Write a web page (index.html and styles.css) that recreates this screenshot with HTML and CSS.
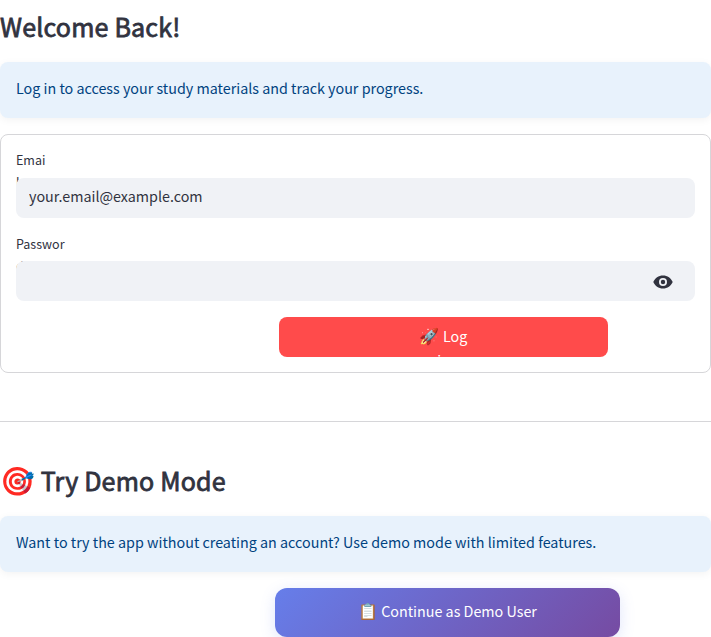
FILE: index.html
```html
<!DOCTYPE html>
<html lang="en">
<head>
<meta charset="utf-8">
<title>Welcome Back!</title>
<link rel="stylesheet" href="styles.css">
</head>
<body>
<main>
  <h2 class="title">Welcome Back!</h2>
  <div class="alert">Log in to access your study materials and track your progress.</div>
  <form class="card">
    <label class="label" for="email">Emai<br>l</label>
    <div class="field"><input id="email" type="text" value="your.email@example.com"></div>
    <label class="label label-password" for="password">Passwor<br>d</label>
    <div class="field">
      <input id="password" type="password">
      <svg class="eye" viewBox="0 0 20 14" aria-hidden="true"><path fill-rule="evenodd" d="M10 .5C5.600.500 1.800 3.200.300 7c1.500 3.800 5.300 6.500 9.700 6.500s8.200-2.700 9.700-6.500C18.200 3.200 14.400.500 10 .500zM10 11a4 4 0 1 1 0-8 4 4 0 0 1 0 8zm0-6.200a2.200 2.200 0 1 0 0 4.400 2.200 2.200 0 0 0 0-4.400z"/></svg>
    </div>
    <button class="login" type="button"><span class="login-text"><span class="emoji">🚀</span> Log<br>in</span></button>
  </form>
  <hr class="divider">
  <h2 class="title demo-title"><span class="emoji">🎯</span> Try Demo Mode</h2>
  <div class="alert">Want to try the app without creating an account? Use demo mode with limited features.</div>
  <button class="demo" type="button"><span class="emoji">📋</span> Continue as Demo User</button>
</main>
</body>
</html>
```
FILE: styles.css
```css
* { box-sizing: border-box; }
html { overflow: hidden; }
body {
  margin: 0;
  background: #fff;
  color: #31333f;
  font-family: "Noto Sans CJK SC", "Noto Color Emoji", sans-serif;
  font-size: 14.32px;
  line-height: 24px;
}
main { display: flex; flex-direction: column; height: 637px; }
.emoji { font-family: "Noto Color Emoji", sans-serif; font-size: 16px; line-height: 1; }
.title {
  margin: 9px 0 19px;
  font-size: 25.06px;
  line-height: 34px;
  font-weight: 400;
  letter-spacing: .18px;
  -webkit-text-stroke: .8px #31333f;
  white-space: nowrap;
}
.title .emoji { font-size: 28px; letter-spacing: 0; -webkit-text-stroke: 0; }
.alert {
  height: 56px;
  flex: none;
  padding: 14px 16px;
  border-radius: 8px;
  background: #e8f2fc;
  color: #004280;
  box-shadow: 0 2px 8px rgba(0, 0, 0, .05);
  white-space: nowrap;
}
.card {
  display: flex;
  flex-direction: column;
  flex: none;
  height: 239px;
  margin-top: 16px;
  padding: 14px 15px 15px;
  border: 1px solid #d6d6d9;
  border-radius: 8px;
}
.label { height: 29px; font-size: 12.53px; line-height: 22px; }
.label-password { margin-top: 15px; height: 28px; }
.field {
  position: relative;
  flex: none;
  display: flex;
  align-items: center;
  height: 40px;
  padding-right: 22px;
  border-radius: 8px;
  background: #f0f2f6;
}
.field input {
  flex: 1;
  height: 38px;
  padding: 0 13px 6px;
  border: 0;
  outline: 0;
  background: transparent;
  color: #31333f;
  font: inherit;
}
.eye { width: 20px; height: 14px; margin-top: 1px; fill: #31333f; }
button { border: 0; color: #fff; font: inherit; }
.login {
  width: 329px;
  height: 40px;
  flex: none;
  margin: 16px 0 0 263px;
  padding: 7px 0;
  border-radius: 8px;
  background: #ff4b4b;
}
.login-text { display: block; height: 26px; line-height: 24px; }
.divider { width: 100%; height: 1px; margin: 48px 0 0; border: 0; background: #d6d6d9; flex: none; }
.demo-title { margin: 41px 0 19px; }
.demo {
  width: 345px;
  height: 49px;
  flex: none;
  margin: 15.500px 0 0 275px;
  padding: 0 0 2px;
  border-radius: 12px;
  background: linear-gradient(135deg, #667eea 0%, #764ba2 100%);
  box-shadow: 0 4px 15px rgba(102, 126, 234, .2);
}
```
